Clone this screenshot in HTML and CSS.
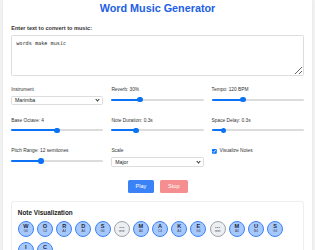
FILE: index.html
```html
<!DOCTYPE html>
<html>
<head>
<meta charset="utf-8">
<title>Word Music Generator</title>
<link rel="stylesheet" href="styles.css">
</head>
<body>
<div class="page">
  <div class="container">
    <h1 class="title">Word Music Generator</h1>
    <label class="main-label" for="text">Enter text to convert to music:</label>
    <textarea id="text" class="text-input">words make music</textarea>

    <div class="controls">
      <div class="group">
        <label class="lbl">Instrument</label>
        <div class="select-wrap"><select class="sel"><option>Marimba</option></select></div>
      </div>
      <div class="group">
        <label class="lbl">Reverb: 30%</label>
        <input class="range" type="range" min="0" max="100" value="30" style="--p:31%">
      </div>
      <div class="group">
        <label class="lbl">Tempo: 120 BPM</label>
        <input class="range" type="range" min="60" max="240" value="120" style="--p:34%">
      </div>
      <div class="group">
        <label class="lbl">Base Octave: 4</label>
        <input class="range" type="range" min="2" max="6" value="4" style="--p:50%">
      </div>
      <div class="group">
        <label class="lbl">Note Duration: 0.3s</label>
        <input class="range" type="range" min="0.1" max="0.9" step="0.1" value="0.3" style="--p:26%">
      </div>
      <div class="group">
        <label class="lbl">Space Delay: 0.3s</label>
        <input class="range" type="range" min="0.1" max="2" step="0.1" value="0.3" style="--p:12%">
      </div>
      <div class="group">
        <label class="lbl">Pitch Range: 12 semitones</label>
        <input class="range" type="range" min="1" max="36" value="12" style="--p:32%">
      </div>
      <div class="group">
        <label class="lbl">Scale</label>
        <div class="select-wrap"><select class="sel"><option>Major</option></select></div>
      </div>
      <div class="group">
        <label class="check"><input type="checkbox" checked><span>Visualize Notes</span></label>
      </div>
    </div>

    <div class="buttons">
      <button class="btn play">Play</button>
      <button class="btn stop" disabled>Stop</button>
    </div>

    <div class="panel">
      <h3 class="panel-title">Note Visualization</h3>
      <div class="notes">
        <div class="note"><span class="letter">W</span><span class="pitch">G4</span></div>
        <div class="note"><span class="letter">O</span><span class="pitch">C4</span></div>
        <div class="note"><span class="letter">R</span><span class="pitch">A4</span></div>
        <div class="note"><span class="letter">D</span><span class="pitch">A4</span></div>
        <div class="note"><span class="letter">S</span><span class="pitch">G4</span></div>
        <div class="note rest"><span class="letter">…</span><span class="pitch">rest</span></div>
        <div class="note"><span class="letter">M</span><span class="pitch">A4</span></div>
        <div class="note"><span class="letter">A</span><span class="pitch">C4</span></div>
        <div class="note"><span class="letter">K</span><span class="pitch">A4</span></div>
        <div class="note"><span class="letter">E</span><span class="pitch">G4</span></div>
        <div class="note rest"><span class="letter">…</span><span class="pitch">rest</span></div>
        <div class="note"><span class="letter">M</span><span class="pitch">A4</span></div>
        <div class="note"><span class="letter">U</span><span class="pitch">B4</span></div>
        <div class="note"><span class="letter">S</span><span class="pitch">G4</span></div>
        <div class="note"><span class="letter">I</span><span class="pitch">F4</span></div>
        <div class="note"><span class="letter">C</span><span class="pitch">D4</span></div>
      </div>
    </div>
  </div>
</div>
</body>
</html>
```
FILE: styles.css
```css
html, body {
  margin: 0;
  padding: 0;
}

body {
  zoom: 0.4;
  background: #f4f4f5;
  font-family: "Liberation Sans", Arial, sans-serif;
  color: #333;
  overflow-x: hidden;
}

.page {
  padding: 0 8px;
}

.container {
  background: #fff;
  padding: 6px 20px 20px;
  box-shadow: 0 0 10px rgba(0, 0, 0, 0.08);
}

.title {
  margin: 0 0 26px;
  font-size: 27px;
  line-height: 31px;
  font-weight: bold;
  text-align: center;
  color: #2160e6;
}

.main-label {
  display: block;
  font-size: 14px;
  line-height: 16px;
  font-weight: bold;
  margin-bottom: 8px;
}

.text-input {
  display: block;
  box-sizing: border-box;
  width: 100%;
  height: 102px;
  padding: 10px;
  border: 1px solid #ddd;
  border-radius: 4px;
  font-family: "DejaVu Sans Mono", monospace;
  font-size: 13px;
  color: #222;
  margin: 0 0 28px;
  resize: vertical;
}

.controls {
  display: grid;
  grid-template-columns: repeat(3, 1fr);
  gap: 29px 20px;
}

.group {
  display: flex;
  flex-direction: column;
}

.lbl {
  display: block;
  font-size: 12px;
  line-height: 14px;
  margin-bottom: 8px;
}

.select-wrap {
  position: relative;
}

.select-wrap::after {
  content: "";
  position: absolute;
  right: 10px;
  top: 7px;
  width: 5px;
  height: 5px;
  border-right: 2px solid #333;
  border-bottom: 2px solid #333;
  transform: rotate(45deg);
  pointer-events: none;
}

.sel {
  -webkit-appearance: none;
  appearance: none;
  display: block;
  box-sizing: border-box;
  width: 100%;
  height: 24px;
  padding: 2px 7px;
  font-family: "Liberation Sans", Arial, sans-serif;
  font-size: 13px;
  border: 1px solid #ddd;
  border-radius: 4px;
  background: #fff;
  color: #222;
}

.range {
  -webkit-appearance: none;
  appearance: none;
  display: block;
  width: 100%;
  height: 20px;
  margin: 0 0 6px;
  background: transparent;
}

.range::-webkit-slider-runnable-track {
  height: 5px;
  border-radius: 3px;
  background: linear-gradient(to right, #0b72f5 var(--p), #dcdcdc var(--p));
}

.range::-webkit-slider-thumb {
  -webkit-appearance: none;
  appearance: none;
  width: 14px;
  height: 14px;
  margin-top: -4.5px;
  border-radius: 50%;
  background: #0b72f5;
  border: none;
}

.check {
  display: flex;
  align-items: center;
  gap: 7px;
  font-size: 12px;
  line-height: 14px;
}

.check input {
  margin: 0;
}

.buttons {
  display: flex;
  justify-content: center;
  gap: 14px;
  margin-top: 32px;
}

.btn {
  padding: 8px 20px;
  font-family: "Liberation Sans", Arial, sans-serif;
  font-size: 14px;
  line-height: 17px;
  border: none;
  border-radius: 4px;
  color: #fff;
}

.play {
  background: #3b82f6;
}

.stop {
  background: #ef4444;
  opacity: 0.6;
}

.panel {
  margin-top: 19px;
  padding: 17px 14px 15px;
  border: 1px solid #eee;
  border-radius: 8px;
  background: #fff;
  box-shadow: 0 1px 3px rgba(0, 0, 0, 0.05);
}

.panel-title {
  margin: 0 0 12px;
  font-size: 16px;
  line-height: 18px;
  font-weight: bold;
  color: #222;
}

.notes {
  display: flex;
  flex-wrap: wrap;
  gap: 12px 8px;
}

.note {
  box-sizing: border-box;
  width: 40px;
  height: 40px;
  border-radius: 50%;
  border: 2px solid #3b82f6;
  background: #a6c8fd;
  display: flex;
  flex-direction: column;
  align-items: center;
  justify-content: center;
}

.note.rest {
  border-color: #9ca3af;
  background: #eceef1;
}

.letter {
  font-size: 14px;
  line-height: 14px;
  font-weight: bold;
  color: #1f2937;
}

.pitch {
  font-size: 8px;
  line-height: 9px;
  color: #374151;
}
```
